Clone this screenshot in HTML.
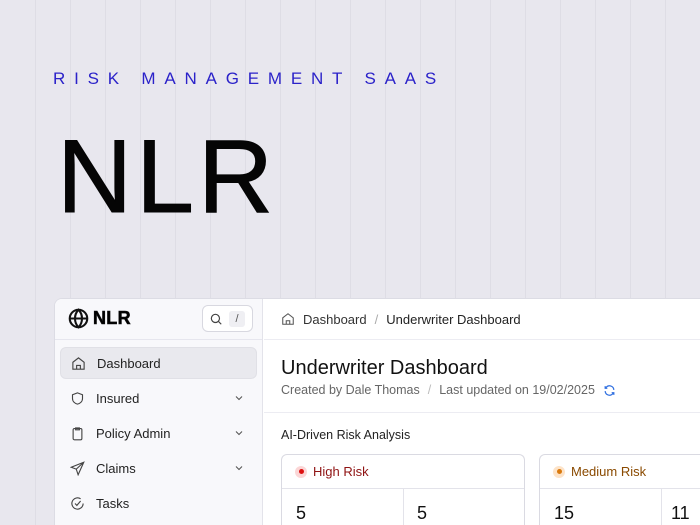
<!DOCTYPE html>
<html><head><style>
*{box-sizing:border-box;margin:0;padding:0}
html,body{width:700px;height:525px;overflow:hidden}
body{background:#e8e7ee;font-family:"Liberation Sans",sans-serif;position:relative}
.vl{position:absolute;top:0;bottom:0;width:1px;background:#dedde5}
.sub{position:absolute;left:53px;top:69px;color:#2b22c9;font-size:17px;letter-spacing:8.8px;white-space:nowrap}
.big{position:absolute;left:57px;top:112px;font-size:104px;color:#050505;letter-spacing:4px;line-height:130px;-webkit-text-stroke:1px #050505}
.panel{position:absolute;left:54px;top:298px;width:646px;height:227px;background:#fff;border:1px solid #dcdce4;border-bottom:none;border-right:none;border-radius:8px 0 0 0;overflow:hidden}
.side{position:absolute;left:0;top:0;width:208px;height:100%;background:#f8f8fb;border-right:1px solid #e3e3ea}
.sh{height:41px;border-bottom:1px solid #e6e6ee;position:relative}
.logo{position:absolute;left:13px;top:9px;display:flex;align-items:center;font-weight:900;font-size:18px;letter-spacing:0.3px;-webkit-text-stroke:0.6px #111}
.logo svg{margin-right:4px}
.srch{position:absolute;left:147px;top:6px;width:51px;height:27px;border:1px solid #d8d8e0;border-radius:6px;background:#fff}
.srch .k{position:absolute;left:26px;top:5px;width:16px;height:16px;background:#efeff3;border-radius:3px;font-size:11px;color:#555;text-align:center;line-height:16px}
.nav{position:absolute;left:5px;width:197px;height:32px;border-radius:6px;display:flex;align-items:center;font-size:13px;color:#222}
.nav svg{margin-left:10px;margin-right:11px}
.nav .ch{position:absolute;right:12px;top:10px;margin:0}
.act{background:#e9e9ee;border:1px solid #e0e0e6}
.main{position:absolute;left:209px;top:0;right:0;height:100%;overflow:hidden}
.mh{height:41px;border-bottom:1px solid #ececf2;display:flex;align-items:center;font-size:13px;color:#222;padding-left:17px}
.mh svg{margin-right:8px}
h1{position:absolute;left:17px;top:58px;font-weight:400;font-size:20px;color:#111}
.meta{position:absolute;left:17px;top:84px;font-size:12.5px;color:#666;display:flex;align-items:center}
.hr{position:absolute;left:0;right:0;top:113px;height:1px;background:#ececf2}
.ai{position:absolute;left:17px;top:129px;font-size:12.5px;color:#222}
.card{position:absolute;top:155px;width:244px;height:72px;border:1px solid #dadae2;border-bottom:none;border-radius:6px 6px 0 0}
.ch2{height:34px;border-bottom:1px solid #e3e3ea;display:flex;align-items:center;padding-left:13px;font-size:13px}
.dot{width:12px;height:12px;border-radius:50%;margin-right:6px;position:relative}
.num{position:absolute;top:48px;font-size:18px;color:#111}
.vd{position:absolute;top:34px;bottom:0;width:1px;background:#e3e3ea}
</style></head><body>
<div class="vl" style="left:35px"></div><div class="vl" style="left:70px"></div><div class="vl" style="left:105px"></div><div class="vl" style="left:140px"></div><div class="vl" style="left:175px"></div><div class="vl" style="left:210px"></div><div class="vl" style="left:245px"></div><div class="vl" style="left:280px"></div><div class="vl" style="left:315px"></div><div class="vl" style="left:350px"></div><div class="vl" style="left:385px"></div><div class="vl" style="left:420px"></div><div class="vl" style="left:455px"></div><div class="vl" style="left:490px"></div><div class="vl" style="left:525px"></div><div class="vl" style="left:560px"></div><div class="vl" style="left:595px"></div><div class="vl" style="left:630px"></div><div class="vl" style="left:665px"></div>
<div class="sub">RISK MANAGEMENT SAAS</div>
<div class="big">NLR</div>
<div class="panel">
 <div class="side">
  <div class="sh">
   <div class="logo"><svg width="21" height="21" viewBox="0 0 24 24" fill="none" stroke="#111" stroke-width="2.4"><circle cx="12" cy="12" r="10"/><path d="M2 12h20M12 2c3 3 4 6.5 4 10s-1 7-4 10c-3-3-4-6.5-4-10s1-7 4-10z"/></svg>NLR</div>
   <div class="srch"><svg style="position:absolute;left:6px;top:6px" width="14" height="14" viewBox="0 0 24 24" fill="none" stroke="#444" stroke-width="2"><circle cx="11" cy="11" r="7"/><path d="M16 16l5 5"/></svg><div class="k">/</div></div>
  </div>
  <div class="nav act" style="top:48px"><svg width="15" height="15" viewBox="0 0 24 24" fill="none" stroke="#444" stroke-width="1.8"><path d="M3 10l9-7 9 7v11H3z"/><path d="M9 21v-6h6v6"/></svg>Dashboard</div>
  <div class="nav" style="top:83px"><svg width="15" height="15" viewBox="0 0 24 24" fill="none" stroke="#444" stroke-width="1.8"><path d="M12 3l8 3v6c0 5-4 8-8 9-4-1-8-4-8-9V6z"/></svg>Insured<svg class="ch" width="12" height="12" viewBox="0 0 24 24" fill="none" stroke="#555" stroke-width="2.2"><path d="M6 9l6 6 6-6"/></svg></div>
  <div class="nav" style="top:118px"><svg width="15" height="15" viewBox="0 0 24 24" fill="none" stroke="#444" stroke-width="1.8"><rect x="5" y="4" width="14" height="18" rx="2"/><path d="M9 3h6v3H9z"/></svg>Policy Admin<svg class="ch" width="12" height="12" viewBox="0 0 24 24" fill="none" stroke="#555" stroke-width="2.2"><path d="M6 9l6 6 6-6"/></svg></div>
  <div class="nav" style="top:153px"><svg width="15" height="15" viewBox="0 0 24 24" fill="none" stroke="#444" stroke-width="1.8"><path d="M22 2L2 10l8 3 3 9z M10 13l12-11"/></svg>Claims<svg class="ch" width="12" height="12" viewBox="0 0 24 24" fill="none" stroke="#555" stroke-width="2.2"><path d="M6 9l6 6 6-6"/></svg></div>
  <div class="nav" style="top:188px"><svg width="15" height="15" viewBox="0 0 24 24" fill="none" stroke="#444" stroke-width="1.8"><path d="M21 12a9 9 0 1 1-4-7.5"/><path d="M8 12l3 3 6-7"/></svg>Tasks</div>
 </div>
 <div class="main">
  <div class="mh"><svg width="14" height="14" viewBox="0 0 24 24" fill="none" stroke="#555" stroke-width="1.8"><path d="M3 10l9-7 9 7v11H3z"/><path d="M9 21v-6h6v6"/></svg><span style="color:#333">Dashboard</span><span style="color:#aaa;margin:0 8px">/</span>Underwriter Dashboard</div>
  <h1>Underwriter Dashboard</h1>
  <div class="meta">Created by Dale Thomas<span style="color:#bbb;margin:0 8px">/</span>Last updated on 19/02/2025<svg style="margin-left:8px" width="13" height="13" viewBox="0 0 24 24" fill="none" stroke="#2f6fe0" stroke-width="2.2"><path d="M20 11a8 8 0 0 0-14-5l-2 2M4 4v4h4M4 13a8 8 0 0 0 14 5l2-2M20 20v-4h-4"/></svg></div>
  <div class="hr"></div>
  <div class="ai">AI-Driven Risk Analysis</div>
  <div class="card" style="left:17px"><div class="ch2" style="color:#8f1313"><span class="dot" style="background:#fbd6d6"><i style="position:absolute;left:3.5px;top:3.5px;width:5px;height:5px;border-radius:50%;background:#d11"></i></span>High Risk</div><div class="vd" style="left:121px"></div><div class="num" style="left:14px">5</div><div class="num" style="left:135px">5</div></div>
  <div class="card" style="left:275px;width:200px"><div class="ch2" style="color:#8a4a00"><span class="dot" style="background:#fde3c8"><i style="position:absolute;left:3.5px;top:3.5px;width:5px;height:5px;border-radius:50%;background:#d9790d"></i></span>Medium Risk</div><div class="vd" style="left:121px"></div><div class="num" style="left:14px">15</div><div class="num" style="left:131px">11</div></div>
 </div>
</div>
</body></html>
